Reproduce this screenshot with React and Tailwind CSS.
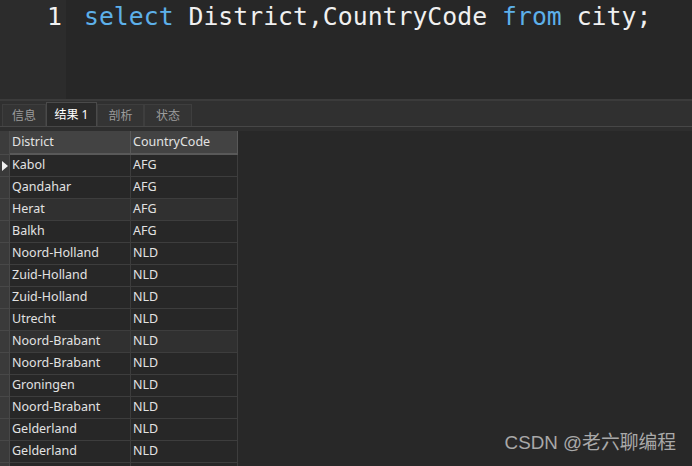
const rows = [
  ["Kabol", "AFG"],
  ["Qandahar", "AFG"],
  ["Herat", "AFG"],
  ["Balkh", "AFG"],
  ["Noord-Holland", "NLD"],
  ["Zuid-Holland", "NLD"],
  ["Zuid-Holland", "NLD"],
  ["Utrecht", "NLD"],
  ["Noord-Brabant", "NLD"],
  ["Noord-Brabant", "NLD"],
  ["Groningen", "NLD"],
  ["Noord-Brabant", "NLD"],
  ["Gelderland", "NLD"],
  ["Gelderland", "NLD"],
  ["", ""],
];

const tabs = [
  { label: "信息", w: "w-[44px]" },
  { label: "结果 1", w: "w-[51px]", active: true },
  { label: "剖析", w: "w-[47px]" },
  { label: "状态", w: "w-[48px]" },
];

const ui = { fontFamily: '"Noto Sans", "Noto Sans CJK SC", sans-serif' };

export default function App() {
  return (
    <div className="relative flex h-[466px] w-[692px] flex-col overflow-hidden bg-[#282828]" style={ui}>
      {/* editor */}
      <div className="flex h-[99px] shrink-0">
        <div
          className="w-[66px] bg-[#2c2c2c] pr-[4px] text-right text-[24.8px] leading-[34px] text-[#f2f2f2]"
          style={{ fontFamily: '"DejaVu Sans Mono", monospace' }}
        >
          1
        </div>
        <div
          className="flex-1 bg-[#272727] pl-[18px] text-[24.8px] leading-[34px] whitespace-pre text-[#f0f0f0]"
          style={{ fontFamily: '"DejaVu Sans Mono", monospace' }}
        >
          <span className="text-[#5db0ea]">select</span> District,CountryCode{" "}
          <span className="text-[#5db0ea]">from</span> city;
        </div>
      </div>
      <div className="h-[2px] shrink-0 bg-[#3b3b3b]" />

      {/* result tabs */}
      <div className="flex h-[25px] shrink-0 items-end bg-[#303030] pl-[2px]">
        {tabs.map((t) =>
          t.active ? (
            <div
              key={t.label}
              className={`${t.w} flex h-[24px] items-center justify-center border border-b-0 border-[#4a4a4a] bg-[#2a2a2a] text-[12px] text-white`}
            >
              {t.label}
            </div>
          ) : (
            <div
              key={t.label}
              className={`${t.w} flex h-[22px] items-center justify-center border border-b-0 border-[#3e3e3e] bg-[#343434] text-[12px] text-[#9c9c9c]`}
            >
              {t.label}
            </div>
          )
        )}
      </div>
      <div className="h-[1px] shrink-0 bg-[#474747]" />
      <div className="h-[4px] shrink-0 bg-[#2e2e2e]" />

      {/* grid */}
      <div className="flex w-fit flex-col text-[12.5px] text-[#e2e2e2]">
        <div className="flex h-[24px]">
          <div className="w-[10px] border-r border-b border-[#4a4a4a] bg-[#3c3c3c]" />
          <div className="flex w-[121px] items-center border-r border-b-2 border-[#595959] bg-[#434343] pt-[1px] pl-[2px]">
            District
          </div>
          <div className="flex w-[107px] items-center border-r border-b-2 border-[#595959] bg-[#434343] pt-[1px] pl-[2px]">
            CountryCode
          </div>
        </div>
        {rows.map(([d, c], i) => (
          <div
            key={i}
            className={`flex h-[22px] ${i === 2 || i === 8 ? "bg-[#303030]" : "bg-[#272727]"}`}
          >
            <div className="flex w-[10px] items-center border-r border-b border-[#484848] bg-[#3a3a3a]">
              {i === 0 && (
                <svg width="7" height="10" viewBox="0 0 7 10" className="ml-[2px]">
                  <path d="M0 0 L6 5 L0 10 Z" fill="#f0f0f0" />
                </svg>
              )}
            </div>
            <div className="flex w-[121px] items-center border-r border-b border-[#3d3d3d] pl-[2px]">{d}</div>
            <div className="flex w-[107px] items-center border-r border-b border-[#3d3d3d] pl-[2px]">{c}</div>
          </div>
        ))}
      </div>

      {/* watermark */}
      <div
        className="absolute right-[16px] bottom-[9px] text-[18.8px] text-[#a9a9a9]"
        style={{ fontFamily: '"Liberation Sans", "Noto Sans CJK SC", sans-serif' }}
      >
        CSDN @老六聊编程
      </div>
    </div>
  );
}
